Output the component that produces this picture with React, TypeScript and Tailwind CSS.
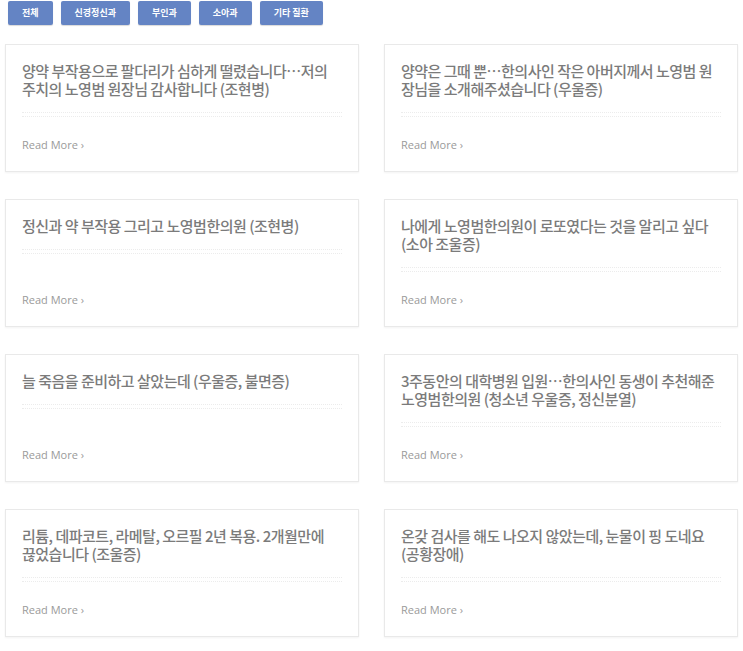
import React from "react";

const cats = ["전체", "신경정신과", "부인과", "소아과", "기타 질환"];

const posts: string[][] = [
  ["양약 부작용으로 팔다리가 심하게 떨렸습니다…저의", "주치의 노영범 원장님 감사합니다 (조현병)"],
  ["양약은 그때 뿐…한의사인 작은 아버지께서 노영범 원", "장님을 소개해주셨습니다 (우울증)"],
  ["정신과 약 부작용 그리고 노영범한의원 (조현병)"],
  ["나에게 노영범한의원이 로또였다는 것을 알리고 싶다", "(소아 조울증)"],
  ["늘 죽음을 준비하고 살았는데 (우울증, 불면증)"],
  ["3주동안의 대학병원 입원…한의사인 동생이 추천해준", "노영범한의원 (청소년 우울증, 정신분열)"],
  ["리튬, 데파코트, 라메탈, 오르필 2년 복용. 2개월만에", "끊었습니다 (조울증)"],
  ["온갖 검사를 해도 나오지 않았는데, 눈물이 핑 도네요", "(공황장애)"],
];

export default function App() {
  return (
    <div className="w-[743px] min-h-[651px] bg-white pt-px px-[5px]" style={{ fontFamily: '"Noto Sans CJK KR", "Noto Sans", sans-serif' }}>
      <div className="flex gap-2 pl-[3px]">
        {cats.map((c) => (
          <div
            key={c}
            className="h-6 px-[14px] flex items-center justify-center bg-[#6484c4] text-white text-[9px] font-bold rounded-[2px] shadow-[0_1px_1px_rgba(0,0,0,0.15)]"
          >
            {c}
          </div>
        ))}
      </div>
      <div className="grid grid-cols-2 gap-x-[25px] gap-y-[27px] mt-[19px]">
        {posts.map((lines, i) => (
          <div
            key={i}
            className="h-[128px] border border-[#e9e9e9] shadow-[0_1px_2px_rgba(0,0,0,0.05)] bg-white flex flex-col px-4 pt-[17px] pb-[19px]"
          >
            <div className="text-[15px] leading-[18px] text-[#7b7b7b] font-medium tracking-[-0.5px]">
              {lines.map((l, j) => (
                <div key={j} className="whitespace-nowrap">{l}</div>
              ))}
            </div>
            <div className="mt-[14px] h-[5px] border-y border-dotted border-[#ececec]" />
            <div
              className="mt-auto text-[11px] leading-[14px] text-[#9a9a9a]"
              style={{ fontFamily: '"Open Sans", sans-serif' }}
            >
              Read More ›
            </div>
          </div>
        ))}
      </div>
    </div>
  );
}
